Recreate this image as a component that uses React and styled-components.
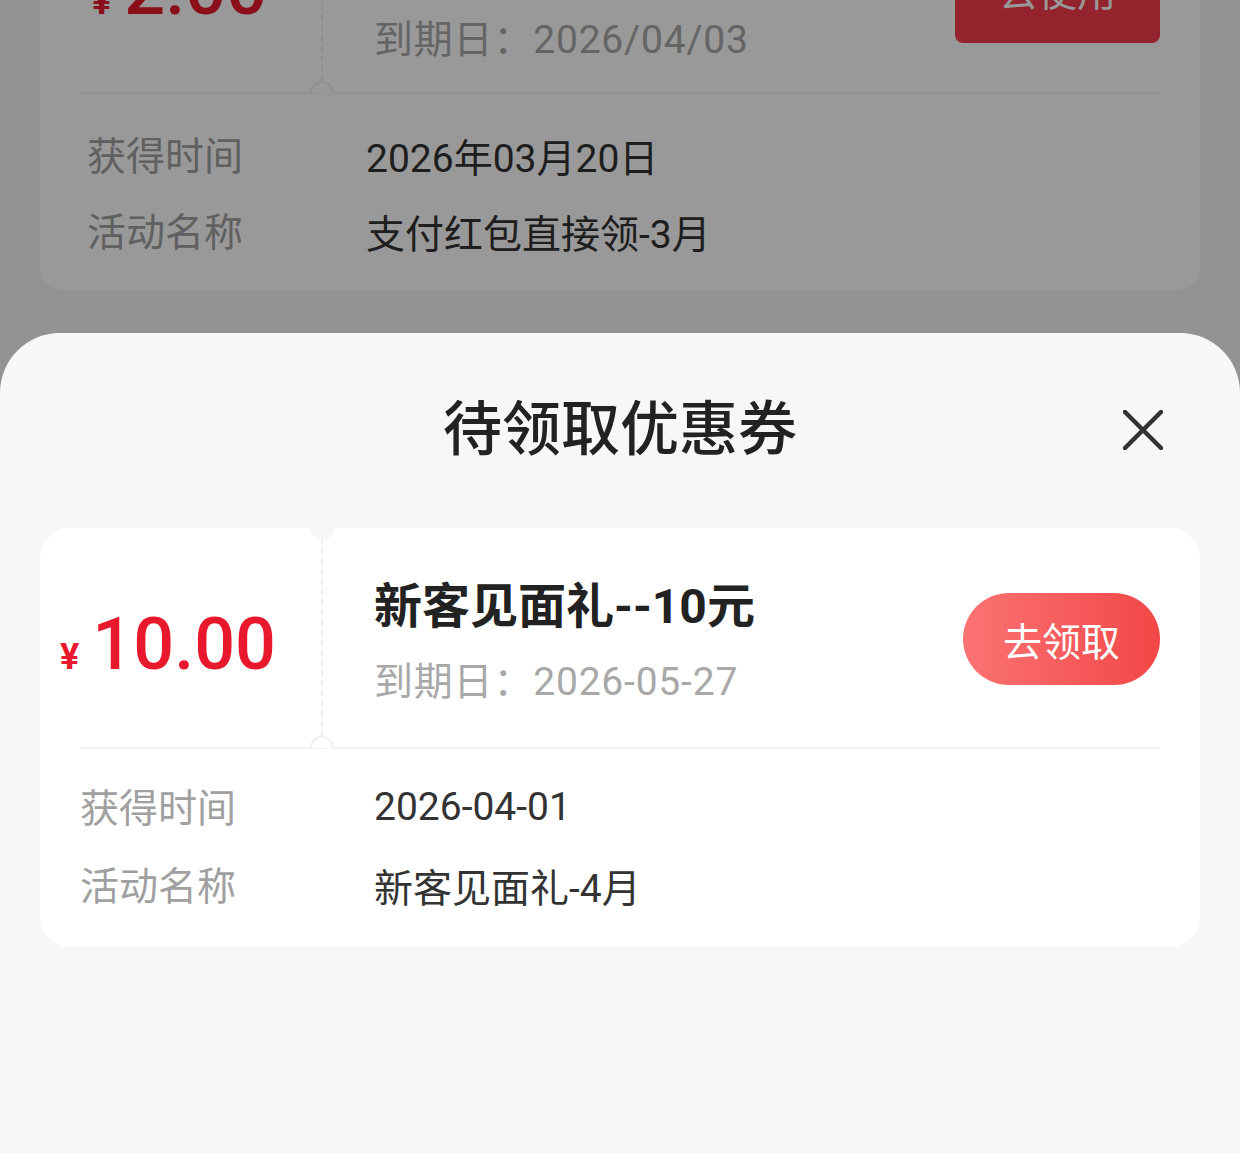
import React from 'react';
import styled, { createGlobalStyle } from 'styled-components';

const GlobalStyle = createGlobalStyle`
  html, body {
    margin: 0;
    padding: 0;
    height: 100%;
    overflow: hidden;
    background: #f5f5f5;
    font-family: Roboto, "Noto Sans CJK SC", sans-serif;
  }
`;

const coupons = {
  used: {
    amount: '2.00',
    title: '支付红包直接领',
    expire: '到期日：2026/04/03',
    action: '去使用',
    gained: '2026年03月20日',
    activity: '支付红包直接领-3月',
  },
  pending: {
    amount: '10.00',
    title: '新客见面礼--10元',
    expire: '到期日：2026-05-27',
    action: '去领取',
    gained: '2026-04-01',
    activity: '新客见面礼-4月',
  },
};

const CloseIcon = () => (
  <svg width="40" height="40" viewBox="0 0 40 40" fill="none">
    <path d="M2 2L38 38M38 2L2 38" stroke="#333" strokeWidth="4.5" strokeLinecap="round" />
  </svg>
);

const CouponCard = ({ coupon, $used }) => (
  <Card $used={$used}>
    <Ticket>
      <Stub $used={$used}>
        <Amount>
          <Yen>¥</Yen>
          {coupon.amount}
        </Amount>
      </Stub>
      <Info $used={$used}>
        <Title>{coupon.title}</Title>
        <Expire>{coupon.expire}</Expire>
      </Info>
      <ActionButton $used={$used}>{coupon.action}</ActionButton>
    </Ticket>
    <Divider />
    <Details $used={$used}>
      <Row>
        <Label $used={$used}>获得时间</Label>
        <Value>{coupon.gained}</Value>
      </Row>
      <Row>
        <Label $used={$used}>活动名称</Label>
        <Value>{coupon.activity}</Value>
      </Row>
    </Details>
  </Card>
);

const App = () => {
  return (
    <>
      <GlobalStyle />
      <Page>
        <CouponCard coupon={coupons.used} $used />
      </Page>
      <Mask />
      <Sheet>
        <SheetHeader>
          <span />
          <SheetTitle>待领取优惠券</SheetTitle>
          <CloseButton aria-label="关闭">
            <CloseIcon />
          </CloseButton>
        </SheetHeader>
        <SheetBody>
          <CouponCard coupon={coupons.pending} />
        </SheetBody>
      </Sheet>
    </>
  );
};

export default App;

const Page = styled.main`
  height: 100vh;
  padding: 0 40px;
  overflow: hidden;
  background: #f5f5f5;
  display: flex;
  flex-direction: column;

  & > * {
    margin-top: -127px;
  }
`;

const Mask = styled.div`
  position: fixed;
  inset: 0;
  background: rgba(0, 0, 0, 0.4);
`;

const Sheet = styled.section`
  position: fixed;
  left: 0;
  right: 0;
  bottom: 0;
  top: 333px;
  background: #f7f7f7;
  border-radius: 60px 60px 0 0;
  display: flex;
  flex-direction: column;
`;

const SheetHeader = styled.header`
  display: grid;
  grid-template-columns: 1fr auto 1fr;
  align-items: center;
  padding-top: 62px;
  height: 70px;
`;

const SheetTitle = styled.h2`
  margin: 0;
  font-size: 59px;
  line-height: 70px;
  font-weight: 500;
  color: #222;
  letter-spacing: 0;
`;

const CloseButton = styled.button`
  justify-self: end;
  margin-right: 67px;
  width: 60px;
  height: 60px;
  padding: 0;
  border: none;
  background: transparent;
  display: flex;
  align-items: center;
  justify-content: center;
`;

const SheetBody = styled.div`
  padding: 63px 40px 0;
`;

const Card = styled.article`
  background: #fff;
  border-radius: ${({ $used }) => ($used ? '22px' : '30px')};
  overflow: hidden;
  position: relative;
  flex-shrink: 0;
`;

const Ticket = styled.div`
  display: flex;
  height: 219px;
  position: relative;
`;

const Divider = styled.hr`
  margin: 0 40px;
  border: none;
  border-top: 2px solid #f3f3f3;
  height: 0;
`;

const Stub = styled.div`
  width: 283px;
  flex-shrink: 0;
  box-sizing: border-box;
  border-right: 2px dashed #eeeeee;
  display: flex;
  align-items: center;
  padding-left: ${({ $used }) => ($used ? '52px' : '20px')};
  padding-top: 14px;
  position: relative;

  &::before,
  &::after {
    content: '';
    position: absolute;
    right: -13px;
    width: 24px;
    height: 12px;
    box-sizing: border-box;
  }

  &::before {
    top: 0;
    background: ${({ $used }) => ($used ? '#f5f5f5' : '#f7f7f7')};
    border-radius: 0 0 12px 12px;
  }

  &::after {
    bottom: -1px;
    background: #fff;
    border: 2px solid #f0f0f0;
    border-bottom: none;
    border-radius: 12px 12px 0 0;
  }
`;

const Amount = styled.div`
  display: flex;
  align-items: baseline;
  color: #e8192c;
  font-family: Roboto, sans-serif;
  font-size: 72px;
  font-weight: 500;
  line-height: 1;
`;

const Yen = styled.span`
  font-size: 36px;
  font-weight: 700;
  margin-right: 13px;
`;

const Info = styled.div`
  flex: 1;
  display: flex;
  flex-direction: column;
  gap: 20px;
  padding-left: 51px;
  padding-top: ${({ $used }) => ($used ? '62px' : '49px')};
  min-width: 0;
`;

const Title = styled.div`
  font-size: 48px;
  line-height: 60px;
  font-weight: 700;
  color: #222;
  white-space: nowrap;
`;

const Expire = styled.div`
  font-size: 39px;
  line-height: 50px;
  letter-spacing: 0.8px;
  color: #a8a8a8;
  white-space: nowrap;
`;

const ActionButton = styled.button`
  flex-shrink: 0;
  align-self: ${({ $used }) => ($used ? 'flex-start' : 'center')};
  margin-top: ${({ $used }) => ($used ? '86px' : '2px')};
  margin-right: 40px;
  width: ${({ $used }) => ($used ? '205px' : '197px')};
  height: ${({ $used }) => ($used ? '84px' : '92px')};
  border: none;
  border-radius: ${({ $used }) => ($used ? '8px' : '46px')};
  background: ${({ $used }) =>
    $used ? '#f53b4c' : 'linear-gradient(90deg, #fb7373 0%, #f24747 100%)'};
  color: #fff;
  font-family: "Noto Sans CJK SC", sans-serif;
  font-size: 39px;
  line-height: ${({ $used }) => ($used ? '60px' : '92px')};
  padding: 0;
  display: flex;
  justify-content: center;
  align-items: ${({ $used }) => ($used ? 'flex-start' : 'center')};
`;

const Details = styled.div`
  display: flex;
  flex-direction: column;
  gap: ${({ $used }) => ($used ? '20px' : '22px')};
  padding: ${({ $used }) => ($used ? '31px 40px 33px 47px' : '28px 40px 36px 40px')};
`;

const Row = styled.div`
  display: flex;
  align-items: center;
  height: 56px;
`;

const Label = styled.span`
  width: ${({ $used }) => ($used ? '279px' : '294px')};
  flex-shrink: 0;
  font-size: 39px;
  color: #a0a0a0;
`;

const Value = styled.span`
  font-size: 39px;
  color: #333;
  padding-top: 4px;
`;
